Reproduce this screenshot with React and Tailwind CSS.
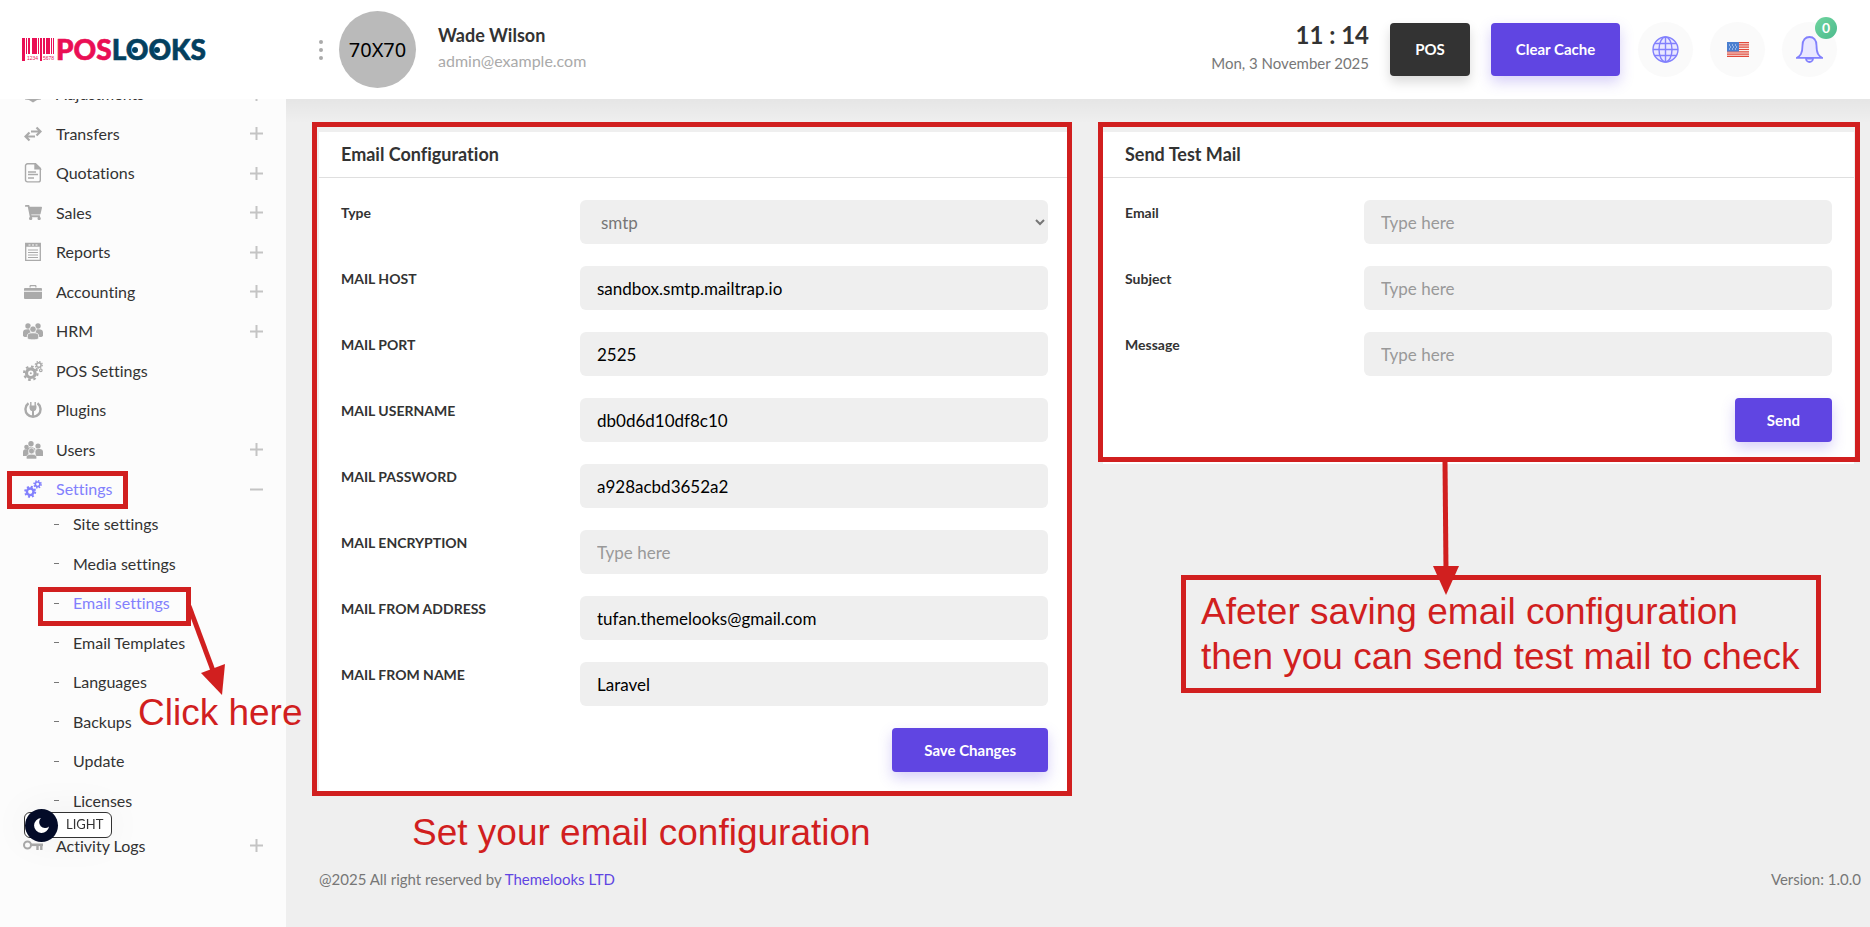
import React from "react";
import { FaShoppingCart } from "react-icons/fa";

const PINK = "#ea0f55";
const NAVY = "#04405f";
const RED = "#d11f1f";

/* ── Sidebar icons ─────────────────────────────────────────── */
const BoxIcon = () => (
  <svg width="18" height="18" viewBox="0 0 18 18" fill="currentColor">
    <path d="M1 4h16v10.500l-4 .5-4 2.500-4-2.500-4-.5z" />
  </svg>
);

const TransferIcon = () => (
  <svg width="18" height="18" viewBox="0 0 18 18" fill="none" stroke="currentColor" strokeWidth="2.200">
    <path d="M7 6.500H16M12.500 2.500l4 4-4 4M11 11.500H2M5.500 7.500l-4 4 4 4" />
  </svg>
);

const QuoteIcon = () => (
  <svg width="18" height="20" viewBox="0 0 18 20" fill="none" stroke="currentColor" strokeWidth="1.400">
    <path d="M3.500.8h8l4.800 4.500v11.600a2 2 0 0 1-2 2H3.500a2 2 0 0 1-2-2V2.800a2 2 0 0 1 2-2z" />
    <path d="M11 .8v5h5.300z" fill="currentColor" />
    <path d="M4 9h8M4 11.500h10M4 15h6" />
  </svg>
);

const ReportIcon = () => (
  <svg width="18" height="20" viewBox="0 0 18 20" fill="none" stroke="currentColor">
    <path d="M1.700 1.500h14.600v16.800H1.700z" strokeWidth="1.300" />
    <path d="M1.500 3h15" strokeWidth="3.500" />
    <path d="M4.500 3h2M8 3h2M11.500 3h2" stroke="#fcfcfc" strokeWidth="1" />
    <path d="M4 8h10M4 10.500h10M4 13h10M4 15.500h10" strokeWidth="1.200" />
  </svg>
);

const BriefcaseIcon = () => (
  <svg width="18" height="16" viewBox="0 0 18 16" fill="currentColor">
    <path d="M5.500 3.500V2.300C5.500 1.500 6 1 6.800 1h4.400c.8 0 1.300.5 1.300 1.300v1.200h-1.200V2.200H6.700v1.300z" />
    <path d="M1 4h16a1 1 0 0 1 1 1v1.700H0V5a1 1 0 0 1 1-1zM0 7.700h18V14a1 1 0 0 1-1 1H1a1 1 0 0 1-1-1z" />
  </svg>
);

const TeamIcon = () => (
  <svg width="20" height="17" viewBox="0 0 20 17" fill="currentColor">
    <circle cx="5" cy="3" r="2.700" />
    <circle cx="15" cy="3" r="2.700" />
    <path d="M0 13V9.500C0 7 1.500 6.200 4.500 6.200c2 0 3 .5 3 2V14H1.500zM20 13V9.500c0-2.500-1.500-3.300-4.500-3.300-2 0-3 .5-3 2V14h6z" />
    <circle cx="10" cy="6.200" r="3.300" stroke="#fcfcfc" strokeWidth=".8" />
    <path d="M4.300 15.500V13c0-2.500 2-3.200 5.700-3.200s5.700.7 5.700 3.200v2.500c-1.500 1.800-9.900 1.800-11.400 0z" stroke="#fcfcfc" strokeWidth=".8" />
  </svg>
);

const BigGearsIcon = () => (
  <svg width="20" height="20" viewBox="0 0 20 20" fill="none" stroke="currentColor">
    <circle cx="7.800" cy="12.200" r="4.300" strokeWidth="3.200" />
    <circle cx="7.800" cy="12.200" r="6.700" strokeWidth="2.200" strokeDasharray="2.600 2.660" />
    <circle cx="7.800" cy="12.200" r="1" fill="currentColor" stroke="none" />
    <circle cx="15.800" cy="4" r="2.300" strokeWidth="1.500" />
    <circle cx="15.800" cy="4" r="3.500" strokeWidth="1.200" strokeDasharray="1.400 1.350" />
    <circle cx="17.800" cy="9.300" r="1.300" strokeWidth="1.200" />
  </svg>
);

const GearsIcon = () => (
  <svg width="18" height="18" viewBox="0 0 18 18" fill="none" stroke="currentColor">
    <circle cx="6.200" cy="11.800" r="3.300" strokeWidth="2.400" />
    <circle cx="6.200" cy="11.800" r="5" strokeWidth="2" strokeDasharray="2 1.927" />
    <circle cx="13.600" cy="4.300" r="2.300" strokeWidth="1.700" />
    <circle cx="13.600" cy="4.300" r="3.500" strokeWidth="1.600" strokeDasharray="1.400 1.350" />
  </svg>
);

const PlugIcon = () => (
  <svg width="18" height="18" viewBox="0 0 18 18" fill="none" stroke="currentColor">
    <path d="M4.500 2.300A7.500 7.500 0 1 0 13.500 2.300" strokeWidth="2.400" />
    <path d="M6.800 1v4M11.200 1v4" strokeWidth="1.400" />
    <path d="M5.500 4.500h7v2c0 2-1 3.200-2.500 3.600V16H8v-5.900C6.500 9.700 5.500 8.500 5.500 6.500z" fill="currentColor" stroke="none" />
  </svg>
);

const CrowdIcon = () => (
  <svg width="20" height="18" viewBox="0 0 20 18" fill="currentColor">
    <circle cx="8" cy="2.700" r="2.700" />
    <circle cx="3.500" cy="6" r="2.300" />
    <circle cx="15" cy="5" r="2.600" />
    <path d="M4 8C5 5.500 11 5.500 12.500 8L11.500 11H5zM0 15v-4C0 8.500 1.500 8.200 3.500 8.200c2 0 2.500 2.300 1.800 6.800zM20 15v-4c0-2.700-2-3-5-3-3 0-3 3-2 7z" />
    <circle cx="8.500" cy="10" r="3" stroke="#fcfcfc" strokeWidth=".7" />
    <path d="M3.500 18c-.8-3 .5-4.700 5-4.700s5.800 1.700 5 4.700z" stroke="#fcfcfc" strokeWidth=".6" />
  </svg>
);

const KeyIcon = () => (
  <svg width="20" height="12" viewBox="0 0 20 12" fill="none" stroke="currentColor">
    <circle cx="4.500" cy="5" r="3.500" strokeWidth="2" />
    <path d="M8 4.800H20" strokeWidth="2.600" />
    <path d="M14.500 5v5M18.300 5v5" strokeWidth="2.400" />
  </svg>
);

const menu = [
  { label: "Adjustments", icon: <BoxIcon />, more: true },
  { label: "Transfers", icon: <TransferIcon />, more: true },
  { label: "Quotations", icon: <QuoteIcon />, more: true },
  { label: "Sales", icon: <FaShoppingCart size={17} />, more: true },
  { label: "Reports", icon: <ReportIcon />, more: true },
  { label: "Accounting", icon: <BriefcaseIcon />, more: true },
  { label: "HRM", icon: <TeamIcon />, more: true },
  { label: "POS Settings", icon: <BigGearsIcon /> },
  { label: "Plugins", icon: <PlugIcon /> },
  { label: "Users", icon: <CrowdIcon />, more: true },
  {
    label: "Settings",
    icon: <GearsIcon />,
    active: true,
    children: [
      "Site settings",
      "Media settings",
      "Email settings",
      "Email Templates",
      "Languages",
      "Backups",
      "Update",
      "Licenses",
    ],
  },
  { label: "Activity Logs", icon: <KeyIcon />, more: true },
];

const mailFields = [
  { id: "host", label: "MAIL HOST", value: "sandbox.smtp.mailtrap.io" },
  { id: "port", label: "MAIL PORT", value: "2525" },
  { id: "username", label: "MAIL USERNAME", value: "db0d6d10df8c10" },
  { id: "password", label: "MAIL PASSWORD", value: "a928acbd3652a2" },
  { id: "encryption", label: "MAIL ENCRYPTION", value: "" },
  { id: "from-address", label: "MAIL FROM ADDRESS", value: "tufan.themelooks@gmail.com" },
  { id: "from-name", label: "MAIL FROM NAME", value: "Laravel" },
];

const testFields = [
  { id: "test-email", label: "Email", value: "" },
  { id: "test-subject", label: "Subject", value: "" },
  { id: "test-message", label: "Message", value: "" },
];

const labelClass = "text-sm leading-[26px] font-bold";
const fieldClass =
  "col-span-2 h-11 w-full rounded-md bg-[#efefef] text-[17px] outline-none";

/* Red frame drawn over whatever it marks */
function Frame({ className }) {
  return (
    <span
      className={`absolute border-5 border-[#d11f1f] pointer-events-none z-20 ${className}`}
    />
  );
}

function Logo() {
  const bars = [
    [0, 3, 23], [4, 1, 16], [6, 2, 16], [10, 5, 16], [16, 1, 16],
    [18, 2, 23], [21, 2, 16], [24, 4, 16], [29, 1, 16], [31, 1, 16],
  ];
  return (
    <svg width="200" height="28" viewBox="0 0 200 28" aria-label="POSLOOKS">
      {bars.map(([x, w, h]) => (
        <rect key={x} x={x} y="2" width={w} height={h} fill={PINK} />
      ))}
      <text x="5" y="24" fontSize="5" fill={PINK} fontFamily="Liberation Sans">1234</text>
      <text x="21" y="24" fontSize="5" fill={PINK} fontFamily="Liberation Sans">5678</text>
      <text x="34" y="24" fontSize="28" fontWeight="900" strokeWidth=".6" fontFamily="Lato, sans-serif">
        <tspan fill={PINK} stroke={PINK}>POS</tspan>
        <tspan fill={NAVY} stroke={NAVY}>LOOKS</tspan>
      </text>
      <circle cx="113" cy="14" r="3" fill={NAVY} />
      <circle cx="135" cy="14" r="3" fill={NAVY} />
    </svg>
  );
}

function Header() {
  return (
    <header className="relative z-30 flex h-[99px] items-center bg-white pr-[33px]">
      <a href="#home" className="flex w-[286px] shrink-0 items-center pl-[22px]">
        <Logo />
      </a>
      <div className="flex flex-1 items-center">
        <button type="button" aria-label="More" className="ml-[33px] flex flex-col gap-1 text-[#aaa]">
          <span className="size-1 rounded-full bg-[#aaa]" />
          <span className="size-1 rounded-full bg-[#aaa]" />
          <span className="size-1 rounded-full bg-[#aaa]" />
        </button>
        <div className="ml-4 flex size-[77px] items-center justify-center rounded-full bg-[#bababa] font-['Noto_Sans'] text-xl text-black">
          70X70
        </div>
        <div className="ml-[22px] pb-[3px]">
          <div className="text-lg leading-[26px] font-bold">Wade Wilson</div>
          <div className="text-base leading-[26px] text-[#aaa]">admin@example.com</div>
        </div>
      </div>
      <div className="pb-[3px] text-right">
        <div className="text-2xl leading-[30px] font-bold">11 : 14</div>
        <div className="text-[15px] leading-[26px] text-[#777]">Mon, 3 November 2025</div>
      </div>
      <button type="button" className="ml-[21px] h-[53px] w-20 rounded bg-[#333] text-[15px] font-bold text-white shadow-[0_6px_12px_rgba(0,0,0,0.15)]">
        POS
      </button>
      <button type="button" className="ml-[21px] h-[53px] w-[129px] rounded bg-[#6045e2] text-[15px] font-bold text-white shadow-[0_6px_14px_rgba(96,69,226,0.25)]">
        Clear Cache
      </button>
      <div className="ml-[18px] flex gap-[17px]">
        <button type="button" aria-label="Visit site" className="flex size-[55px] items-center justify-center rounded-full bg-[#fafafa]">
          <svg width="27" height="27" viewBox="0 0 27 27" fill="#e9e7ff" stroke="#8280fd" strokeWidth="1.400">
            <circle cx="13.500" cy="13.500" r="12.500" />
            <ellipse cx="13.500" cy="13.500" rx="6.500" ry="12.500" />
            <path d="M13.500 1v25M1 13.500h25M3 7.500h21M3 19.500h21" fill="none" />
          </svg>
        </button>
        <button type="button" aria-label="Language" className="flex size-[55px] items-center justify-center rounded-full bg-[#fafafa]">
          <svg width="22" height="15" viewBox="0 0 22 15">
            <path fill="#f7ece8" d="M0 0h22v15H0z" />
            <path stroke="#e2493b" strokeWidth="1.200" d="M0 .6h22M0 2.900h22M0 5.200h22M0 7.500h22M0 9.800h22M0 12.100h22M0 14.400h22" />
            <path fill="#4a7fd0" d="M0 0h12v9.500H0z" />
            <path stroke="#dfe9fa" strokeWidth="1" strokeDasharray="1 2" d="M2 3h9M3 5h8M2 7h9" />
          </svg>
        </button>
        <button type="button" aria-label="Notifications" className="relative flex size-[55px] items-center justify-center rounded-full bg-[#fafafa]">
          <svg width="27" height="27" viewBox="0 0 27 27" fill="#e9e7ff" stroke="#8280fd" strokeWidth="1.800">
            <path d="M10 22.500a3.500 3.500 0 0 0 7 0z" />
            <path d="M1 21.800c3-1.800 5.500-3.800 5.500-12.300C6.500 4 9.500 1 13.500 1s7 3 7 8.500c0 8.500 2.500 10.500 5.500 12.300z" />
          </svg>
          <span className="absolute -top-[5px] right-0 flex size-[22px] items-center justify-center rounded-full bg-linear-to-br from-[#6fd59f] to-[#4cba8d] text-sm font-bold text-white">
            0
          </span>
        </button>
      </div>
    </header>
  );
}

function Sidebar() {
  return (
    <aside className="relative z-10 w-[286px] shrink-0 bg-[#fcfcfc]">
      {/* The list is scrolled a little, its top lies under the header */}
      <div className="flex flex-col">
        <ul className="-mt-[25px]">
          {menu.map((item, index) => (
            <li key={item.label}>
              <a
                href="#menu"
                className={`relative flex items-center pr-[23px] pl-[22px] text-base ${index % 2 ? "h-[39px]" : "h-10"} ${item.active ? "text-[#8280fd]" : ""}`}
              >
                <span className={`flex w-[22px] justify-center ${item.active ? "" : "text-[#aaa]"}`}>
                  {item.icon}
                </span>
                <span className="ml-3 flex-1">{item.label}</span>
                {(item.more || item.children) && (
                  <svg width="13" height="13" viewBox="0 0 13 13" stroke="#c4c4c4" strokeWidth="2">
                    <path d={item.children ? "M0 6.500h13" : "M0 6.500h13M6.500 0v13"} />
                  </svg>
                )}
                {item.active && <Frame className="top-0.5 left-[7px] h-[38px] w-[121px]" />}
              </a>
              {item.children && (
                <ul className="-mt-[5px] mb-1.5">
                  {item.children.map((child, i) => (
                    <li key={child}>
                      <a
                        href="#sub"
                        className={`relative flex items-center gap-3.5 pl-[54px] text-base ${i % 2 ? "h-[39px]" : "h-10"}`}
                      >
                        <span className="h-px w-[5px] bg-[#777]" />
                        {child === "Email settings" ? (
                          <span className="text-[#8280fd]">{child}</span>
                        ) : (
                          child
                        )}
                        {child === "Email settings" && (
                          <>
                            <Frame className="top-1 left-[38px] h-[39px] w-[153px]" />
                            <ClickHere />
                          </>
                        )}
                      </a>
                    </li>
                  ))}
                </ul>
              )}
            </li>
          ))}
        </ul>
      </div>

      {/* Theme switch floats over the menu */}
      <button
        type="button"
        className="fixed bottom-[89px] left-6 z-10 flex h-[26px] w-[88px] items-center rounded-md border border-[#333] bg-white text-[13px] shadow-[0_0_40px_rgba(0,0,0,0.06)]"
      >
        <span className="flex size-[33px] items-center justify-center rounded-full bg-[#030b28]">
          <svg width="17" height="17" viewBox="0 0 17 17" fill="#fff">
            <path d="M8 1a7.500 7.500 0 1 0 8 8.500A4.800 4.800 0 0 1 8 1z" />
          </svg>
        </span>
        <span className="ml-2">LIGHT</span>
      </button>
    </aside>
  );
}

/* Arrow and caption that start at the "Email settings" link */
function ClickHere() {
  return (
    <span className="absolute top-5 left-[138px] z-20 w-max pointer-events-none">
      <svg width="100" height="94" viewBox="0 0 100 94" fill={RED}>
        <path d="M51 3L77 73" stroke={RED} strokeWidth="5" />
        <path d="M63 70l24-9-3 31z" />
      </svg>
      <span className="block -mt-[5px] font-['Liberation_Sans'] text-[37px] leading-[42px] text-[#d11f1f]">
        Click here
      </span>
    </span>
  );
}

function Card({ title, fields, action, frame, children }) {
  return (
    <form className="relative bg-white" onSubmit={(e) => e.preventDefault()}>
      <h2 className="border-b border-[#dfdfdf] px-[22px] py-2.5 text-lg leading-[25px] font-bold">
        {title}
      </h2>
      <div className="flex flex-col gap-[22px] p-[22px]">
        {children}
        {fields.map((field) => (
          <div key={field.id} className="grid grid-cols-3 gap-x-2.5">
            <label htmlFor={field.id} className={labelClass}>
              {field.label}
            </label>
            <input
              id={field.id}
              type="text"
              defaultValue={field.value}
              placeholder="Type here"
              className={`${fieldClass} px-[17px] text-black placeholder:text-[#999]`}
            />
          </div>
        ))}
        <button
          type="submit"
          className="h-11 self-end rounded bg-[#6045e2] px-8 text-[15px] font-bold text-white shadow-[0_6px_14px_rgba(96,69,226,0.25)]"
        >
          {action}
        </button>
      </div>
      <Frame className={frame} />
    </form>
  );
}

function App() {
  return (
    <div className="flex min-h-screen flex-col overflow-hidden bg-[#efefef] font-[Lato,sans-serif] text-[#333] [font-variant-ligatures:none]">
      <Header />
      <div className="flex flex-1">
        <Sidebar />
        <div className="relative flex flex-1 flex-col">
          {/* Shade under the header */}
          <div className="absolute inset-x-0 top-0 h-6 bg-linear-to-b from-black/4 to-transparent" />

          <main className="relative grid grid-cols-2 items-start gap-x-[33px] pt-[33px] pr-4 pl-[33px]">
            <section>
              <Card
                title="Email Configuration"
                fields={mailFields}
                action="Save Changes"
                frame="-top-2.5 -right-0.5 -bottom-0.5 -left-[7px]"
              >
                <div className="grid grid-cols-3 gap-x-2.5">
                  <label htmlFor="type" className={labelClass}>
                    Type
                  </label>
                  <select id="type" className={`${fieldClass} pl-[17px] text-[#777]`}>
                    <option>smtp</option>
                  </select>
                </div>
              </Card>
              <p className="mt-4 pl-[93px] font-['Liberation_Sans'] text-[37px] leading-[45px] text-[#d11f1f]">
                Set your email configuration
              </p>
            </section>

            <section>
              <Card
                title="Send Test Mail"
                fields={testFields}
                action="Send"
                frame="-top-2.5 -right-1.5 bottom-0.5 -left-[5px]"
              />
              <div className="relative mt-[111px] ml-[78px] w-fit border-5 border-[#d11f1f] pt-[9px] pr-4 pb-[9px] pl-[15px] font-['Liberation_Sans'] text-[37px] leading-[45px] whitespace-nowrap text-[#d11f1f]">
                Afeter saving email configuration
                <br />
                then you can send test mail to check
                <svg
                  className="absolute -top-[119px] left-[245px]"
                  width="30"
                  height="134"
                  viewBox="0 0 30 134"
                  fill={RED}
                >
                  <path d="M14 0l1 110" stroke={RED} strokeWidth="5" />
                  <path d="M2 105h26L15 134z" />
                </svg>
              </div>
            </section>
          </main>

          <footer className="mt-auto flex justify-between pt-2 pr-[9px] pb-9 pl-[33px] text-[15px] leading-6 text-[#777]">
            <span>
              @2025 All right reserved by{" "}
              <a href="#themelooks" className="text-[#6045e2]">
                Themelooks LTD
              </a>
            </span>
            <span>Version: 1.0.0</span>
          </footer>
        </div>
      </div>
    </div>
  );
}

export default App;
